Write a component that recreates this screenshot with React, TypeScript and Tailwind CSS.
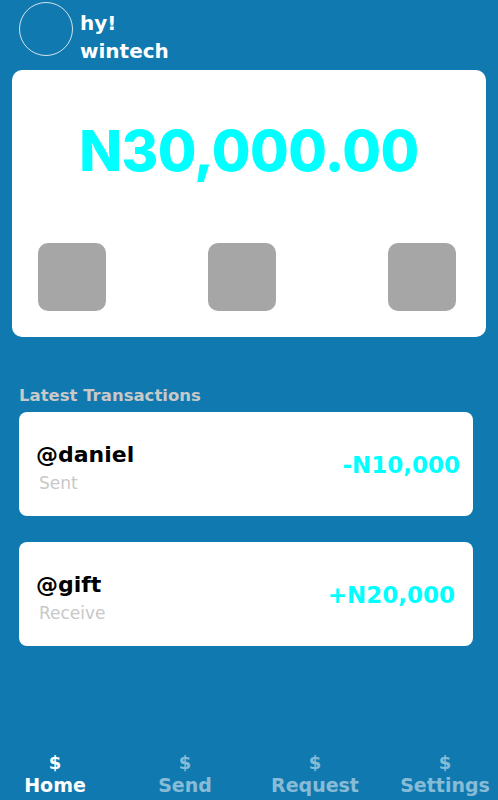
import React from "react";

const txns = [
  { user: "@daniel", kind: "Sent", amount: "-N10,000", pr: "pr-[13px]" },
  { user: "@gift", kind: "Receive", amount: "+N20,000", pr: "pr-[18px]" },
];

const tabs = ["Home", "Send", "Request", "Settings"];

export default function App() {
  return (
    <div className="relative h-[800px] w-[498px] overflow-hidden bg-[#0f79b0] font-['DejaVu_Sans','Noto_Sans',sans-serif]">
      {/* header */}
      <div className="flex h-[56px] items-start pl-[19px] pt-[2px]">
        <div className="h-[54px] w-[54px] rounded-full border border-white/80" />
        <div className="ml-[7px] mt-[7px] text-[20px] font-bold leading-[28px] text-white">
          <div>hy!</div>
          <div>wintech</div>
        </div>
      </div>

      {/* balance card */}
      <div className="mx-[12px] mt-[14px] h-[267px] rounded-[10px] bg-white">
        <div className="pt-[46px] text-center font-['Inter',sans-serif] text-[56px] font-extrabold leading-[70px] tracking-[-0.5px] text-[#00ffff]">
          N30,000.00
        </div>
        <div className="mt-[57px] flex">
          <div className="ml-[26px] h-[68px] w-[68px] rounded-[10px] bg-[#a6a6a6]" />
          <div className="ml-[102px] h-[68px] w-[68px] rounded-[10px] bg-[#a6a6a6]" />
          <div className="ml-[112px] h-[68px] w-[68px] rounded-[10px] bg-[#a6a6a6]" />
        </div>
      </div>

      {/* transactions */}
      <div className="mt-[47px] pl-[19px] text-[16.5px] font-bold leading-[24px] text-[#c8c8c8]">
        Latest Transactions
      </div>
      <div className="ml-[19px] mr-[25px] mt-[4px] flex flex-col gap-[26px]">
        {txns.map((t) => (
          <div
            key={t.user}
            className={`flex h-[104px] items-center justify-between rounded-[8px] bg-white pl-[17px] ${t.pr}`}
          >
            <div className="mt-[10px]">
              <div className="text-[22px] font-bold leading-[28px] text-black">{t.user}</div>
              <div className="pl-[3px] text-[17px] leading-[28px] text-[#c8c8c8]">{t.kind}</div>
            </div>
            <div className="mt-[2px] text-[23px] font-bold leading-[28px] text-[#00ffff]">{t.amount}</div>
          </div>
        ))}
      </div>

      {/* bottom nav */}
      <div className="absolute bottom-[3px] left-[-10px] grid grid-cols-[repeat(4,130px)]">
        {tabs.map((t, i) => (
          <div
            key={t}
            className={`flex flex-col items-center font-bold ${
              i === 0 ? "text-white" : "text-white/50"
            }`}
          >
            <span className="text-[18px] leading-[20px]">$</span>
            <span className="text-[19px] leading-[24px]">{t}</span>
          </div>
        ))}
      </div>
    </div>
  );
}
